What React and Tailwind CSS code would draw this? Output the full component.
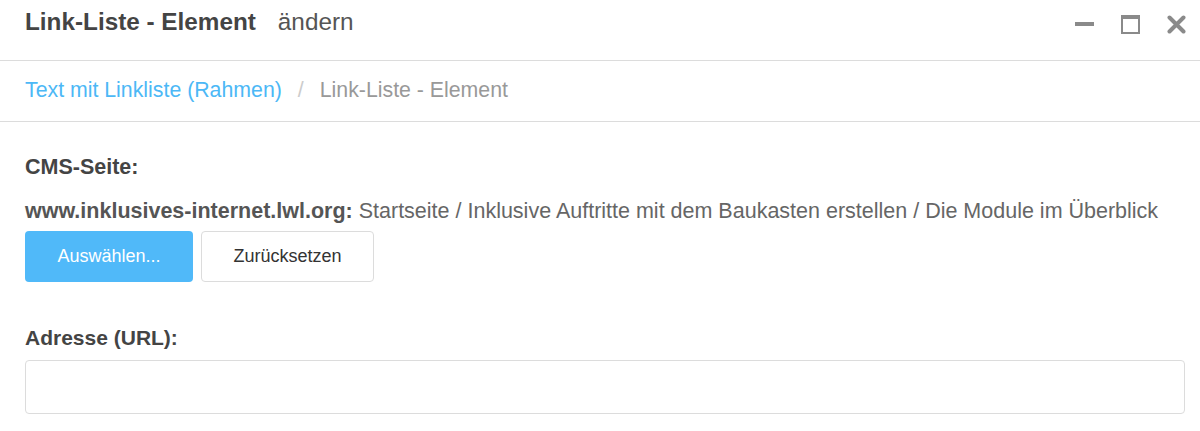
export default function App() {
  return (
    <div className="w-[1200px] h-[431px] bg-white overflow-hidden" style={{ fontFamily: '"Liberation Sans", Arial, sans-serif' }}>
      <div className="h-[61px] border-b border-[#dcdcdc] flex items-start justify-between pl-[25px] pr-[14px]">
        <div className="flex items-baseline text-[#444] pt-[7px] leading-[30px]">
          <span className="text-[24.3px] font-bold">Link-Liste - Element</span>
          <span className="text-[24.3px] ml-[22px] text-[#555]">ändern</span>
        </div>
        <div className="flex items-center gap-[27px] mt-[15px]">
          <svg width="19" height="19" viewBox="0 0 19 19">
            <rect x="0" y="7" width="19" height="4" fill="#8a8a8a" />
          </svg>
          <svg width="19" height="19" viewBox="0 0 19 19">
            <rect x="1" y="1" width="17" height="17" fill="none" stroke="#8a8a8a" strokeWidth="2" />
            <rect x="1" y="1" width="17" height="3" fill="#8a8a8a" />
          </svg>
          <svg width="19" height="19" viewBox="0 0 19 19">
            <path d="M2.5 2.5 L16.5 16.5 M16.5 2.5 L2.5 16.5" stroke="#8a8a8a" strokeWidth="4" strokeLinecap="round" />
          </svg>
        </div>
      </div>
      <div className="h-[61px] border-b border-[#dcdcdc] flex items-center px-[25px] text-[21.3px]">
        <span className="text-[#4cb8f6]">Text mit Linkliste (Rahmen)</span>
        <span className="text-[#ccc] mx-[16px]">/</span>
        <span className="text-[#999]">Link-Liste - Element</span>
      </div>
      <div className="px-[25px] pt-[33px]">
        <div className="text-[21.5px] font-bold text-[#444] leading-[24px]">CMS-Seite:</div>
        <div className="mt-[20px] text-[21.5px] text-[#666] leading-[24px] whitespace-nowrap">
          <span className="font-bold text-[#555]">www.inklusives-internet.lwl.org:</span> Startseite / Inklusive Auftritte mit dem Baukasten erstellen / Die Module im Überblick
        </div>
        <div className="flex gap-[8px] mt-[8px]">
          <button className="w-[168px] h-[51px] rounded-[4px] bg-[#50b9f9] text-white text-[18px]">Auswählen...</button>
          <button className="w-[173px] h-[51px] rounded-[4px] bg-white border border-[#dcdcdc] text-[#333] text-[18px]">Zurücksetzen</button>
        </div>
        <div className="mt-[44px] text-[21px] font-bold text-[#444] leading-[24px]">Adresse (URL):</div>
        <div className="mt-[10px] h-[54px] w-[1160px] rounded-[4px] border border-[#dcdcdc] bg-white"></div>
      </div>
    </div>
  );
}
